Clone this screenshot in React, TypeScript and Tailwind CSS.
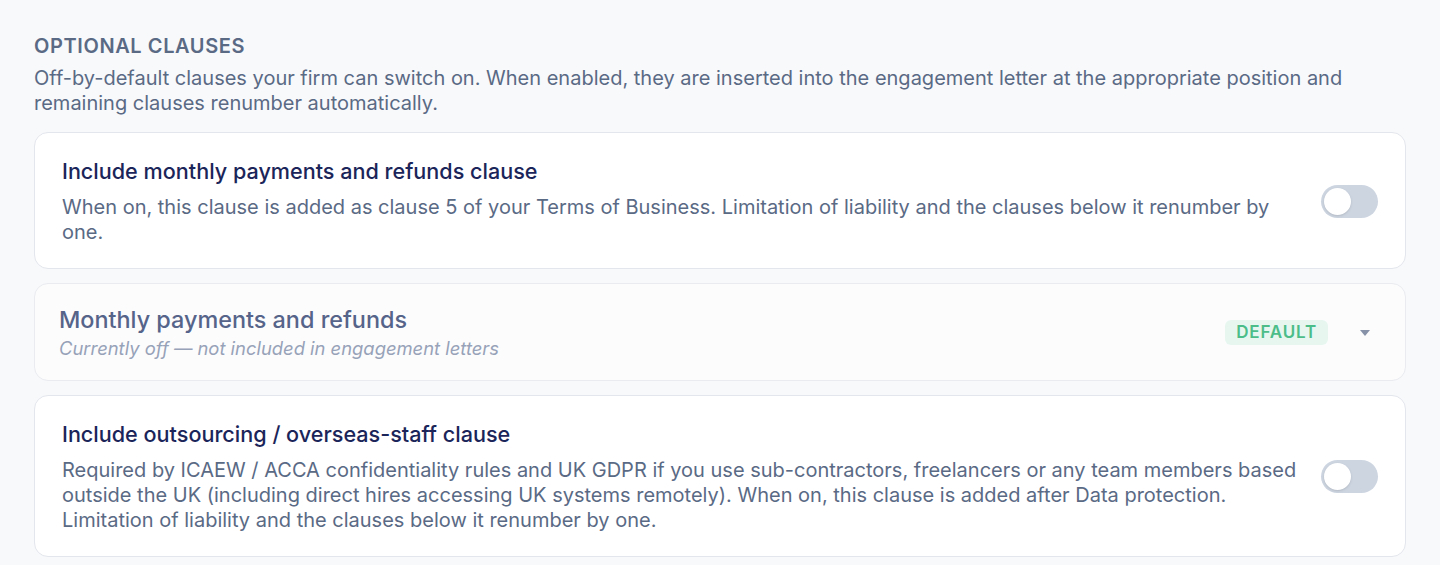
import { useState } from "react";

function Toggle({ on, onChange }: { on: boolean; onChange: () => void }) {
  return (
    <button
      type="button"
      onClick={onChange}
      className={`relative h-[33px] w-[57px] shrink-0 rounded-full p-[3px] transition-colors ${
        on ? "bg-[#4f7cf6]" : "bg-[#cdd5e1]"
      }`}
    >
      <span
        className={`block h-[27px] w-[27px] rounded-full bg-white shadow-sm transition-transform ${
          on ? "translate-x-[24px]" : "translate-x-0"
        }`}
      />
    </button>
  );
}

export default function App() {
  const [monthly, setMonthly] = useState(false);
  const [outsourcing, setOutsourcing] = useState(false);

  return (
    <div
      className="min-h-[565px] w-full bg-[#f8f9fb] px-[34px] pt-[34px]"
      style={{ fontFamily: "Inter, 'Noto Sans', sans-serif" }}
    >
      <h2 className="text-[20px] font-semibold uppercase leading-[25px] tracking-[0.03em] text-[#5a6a85]">
        Optional clauses
      </h2>
      <p className="mt-[7px] text-[20px] leading-[25px] text-[#5a6a85]">
        Off-by-default clauses your firm can switch on. When enabled, they are inserted into the engagement letter at the
        appropriate position and remaining clauses renumber automatically.
      </p>

      <div className="mt-[16px] flex flex-col gap-[14px]">
        {/* optional clause 1 */}
        <div className="flex items-center gap-5 rounded-[14px] border border-[#e3e6ec] bg-white px-[27px] pb-[23px] pt-[24px]">
          <div className="flex-1">
            <h3 className="text-[21.6px] font-medium leading-[28px] text-[#1b2559]">
              Include monthly payments and refunds clause
            </h3>
            <p className="mt-[10px] text-[20px] leading-[25px] text-[#5a6a85]">
              When on, this clause is added as clause 5 of your Terms of Business. Limitation of liability and the
              clauses below it renumber by one.
            </p>
          </div>
          <Toggle on={monthly} onChange={() => setMonthly(!monthly)} />
        </div>

        {/* clause preview (disabled) */}
        <div className="flex items-center rounded-[14px] border border-[#e9ebf0] bg-[#fcfcfd] pl-[24px] pr-[24px] pb-[20px] pt-[21px]">
          <div className="flex-1">
            <h3 className="text-[23.4px] font-medium leading-[30px] text-[#56648a]">Monthly payments and refunds</h3>
            <p className="mt-[1px] text-[18.4px] italic leading-[24px] text-[#97a2b8]">
              Currently off — not included in engagement letters
            </p>
          </div>
          <span className="rounded-[6px] bg-[#e7f7f0] px-[11px] py-[1px] text-[17px] font-semibold leading-[23px] tracking-[0.05em] text-[#4cbd89]">
            DEFAULT
          </span>
          <svg viewBox="0 0 10 6" className="ml-[32px] mr-[11px] h-[6px] w-[10px] fill-[#8792a8]">
            <path d="M0 0h10L5 6z" />
          </svg>
        </div>

        {/* optional clause 2 */}
        <div className="flex items-center gap-5 rounded-[14px] border border-[#e3e6ec] bg-white px-[27px] pb-[23px] pt-[24px]">
          <div className="flex-1">
            <h3 className="text-[21.6px] font-medium leading-[28px] text-[#1b2559]">
              Include outsourcing / overseas-staff clause
            </h3>
            <p className="mt-[10px] text-[20px] leading-[25px] text-[#5a6a85]">
              Required by ICAEW / ACCA confidentiality rules and UK GDPR if you use sub-contractors, freelancers or any
              team members based outside the UK (including direct hires accessing UK systems remotely). When on, this
              clause is added after Data protection. Limitation of liability and the clauses below it renumber by one.
            </p>
          </div>
          <Toggle on={outsourcing} onChange={() => setOutsourcing(!outsourcing)} />
        </div>
      </div>
    </div>
  );
}
